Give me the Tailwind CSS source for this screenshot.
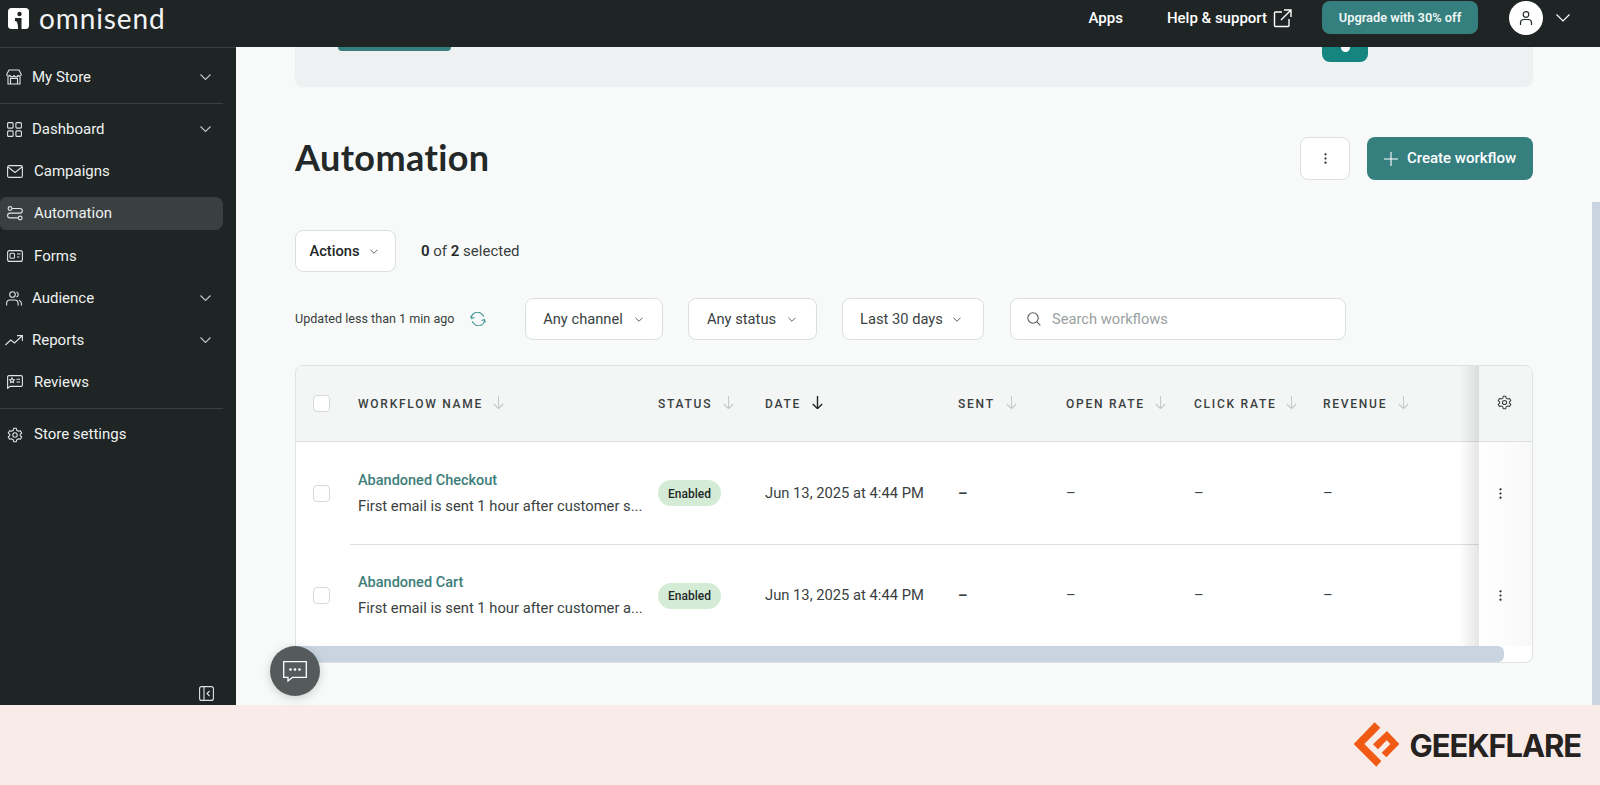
<!DOCTYPE html>
<html lang="en">
<head>
    <meta charset="UTF-8">
    <title>Omnisend Automation</title>
    <script src="https://cdn.jsdelivr.net/npm/@tailwindcss/browser@4"></script>
</head>
<body class="w-[1600px] h-[785px] overflow-hidden bg-[#f9ebe8] font-['Roboto',sans-serif] text-[#232828]">
    <!-- top bar -->
    <header class="h-[47px] bg-[#1f2424] flex items-center text-white relative z-10">
        <svg class="ml-[8px] w-[21px] h-[21px] -mt-[10px]" viewBox="0 0 21 21">
            <rect width="21" height="21" rx="3.5" fill="#fff"/>
            <circle cx="11.5" cy="6" r="2.2" fill="#1f2424"/>
            <path d="M7 10h6.5v11H10c0-5-.5-8-3-8z" fill="#1f2424"/>
        </svg>
        <span class="ml-[10px] -mt-[12px] font-['Lato',sans-serif] text-[28px] leading-none tracking-[0.9px] text-[#f2f4f4]">omnisend</span>
        <span class="ml-auto text-[15px] font-medium -mt-[11px]">Apps</span>
        <span class="ml-[44px] text-[15px] font-medium -mt-[11px]">Help &amp; support</span>
        <svg class="ml-[6px] w-[19px] h-[19px] -mt-[11px]" viewBox="0 0 19 19" fill="none" stroke="#fff" stroke-width="1.4"><path d="M9 3H2.5a1 1 0 0 0-1 1v12.5a1 1 0 0 0 1 1H15a1 1 0 0 0 1-1V10M11 1h7v7M18 1 8 11"/></svg>
        <span class="ml-[30px] w-[156px] h-[33px] -mt-[12px] rounded-lg bg-[#35807f] text-[12.8px] font-semibold text-[#f0f7f6] flex items-center justify-center">Upgrade with 30% off</span>
        <span class="ml-[31px] w-[34px] h-[34px] -mt-[12px] rounded-full bg-white flex items-center justify-center">
            <svg class="w-[16px] h-[16px]" viewBox="0 0 16 16" fill="none" stroke="#232828" stroke-width="1.2"><circle cx="8" cy="4.5" r="2.8"/><path d="M2.5 15v-2a3.5 3.5 0 0 1 3.5-3.5h4a3.5 3.5 0 0 1 3.5 3.5v2"/></svg>
        </span>
        <svg class="ml-[13px] mr-[30px] w-[14px] h-[8px] -mt-[11px]" viewBox="0 0 14 8" fill="none" stroke="#fff" stroke-width="1.2"><path d="m.5.5 6.500 6.500 6.500-6.500"/></svg>
    </header>

    <div class="flex h-[658px] relative">
        <!-- sidebar -->
        <aside class="w-[236px] shrink-0 bg-[#1f2424] text-[15px] text-[#eef2f2] border-t border-[#3a3f3f] relative">
            <div class="h-[57px] pt-[4px] mr-[13px] border-b border-[#3a4040] flex items-center pl-[6px] -mt-px">
                <svg class="w-[16px] h-[16px] mr-[10px]" viewBox="0 0 16 16" fill="none" stroke="#dfe4e4" stroke-width="1.1"><path d="M3 1h10l2.300 4.500a1.700 1.700 0 0 1-3.300.4 2 2 0 0 1-4 0 2 2 0 0 1-4 0 1.700 1.700 0 0 1-3.300-.4zM2 7v8h12V7M4.500 9.500h7V15h-7z"/></svg>
                <span>My Store</span>
                <svg class="ml-auto mr-[12px] w-[11px] h-[6px]" viewBox="0 0 11 6" fill="none" stroke="#c3c9c9" stroke-width="1.1"><path d="m.5.5 5 5 5-5"/></svg>
            </div>
            <div class="h-[42px] mt-[4px] mr-[13px] flex items-center pl-[6px]">
                <svg class="w-[15px] h-[15px] mr-[10px] ml-px" viewBox="0 0 15 15" fill="none" stroke="#dfe4e4" stroke-width="1.1"><rect x=".6" y=".6" width="5.500" height="5.500" rx="1"/><rect x="8.900" y=".6" width="5.500" height="5.500" rx="1"/><rect x=".6" y="8.900" width="5.500" height="5.500" rx="1"/><rect x="8.900" y="8.900" width="5.500" height="5.500" rx="1"/></svg>
                <span>Dashboard</span>
                <svg class="ml-auto mr-[12px] w-[11px] h-[6px]" viewBox="0 0 11 6" fill="none" stroke="#c3c9c9" stroke-width="1.1"><path d="m.5.5 5 5 5-5"/></svg>
            </div>
            <div class="h-[42px] mr-[13px] flex items-center pl-[7px]">
                <svg class="w-[16px] h-[13px] mr-[11px]" viewBox="0 0 16 13" fill="none" stroke="#dfe4e4" stroke-width="1.1"><rect x=".6" y=".6" width="14.800" height="11.800" rx="1.500"/><path d="m1 2 7 5.500L15 2"/></svg>
                <span>Campaigns</span>
            </div>
            <div class="h-[33px] mt-[5px] mr-[13px] rounded-r-lg rounded-l-md bg-[#3a4040] flex items-center pl-[7px]">
                <svg class="w-[16px] h-[15px] mr-[11px]" viewBox="0 0 16 15" fill="none" stroke="#dfe4e4" stroke-width="1.1"><circle cx="3" cy="2.500" r="1.900"/><path d="M5 2.500h8a2.300 2.300 0 0 1 0 4.600H3a2.300 2.300 0 0 0 0 4.800h8"/><circle cx="13.200" cy="12" r="1.900"/></svg>
                <span>Automation</span>
            </div>
            <div class="h-[42px] mt-[5px] mr-[13px] flex items-center pl-[7px]">
                <svg class="w-[16px] h-[12px] mr-[11px]" viewBox="0 0 16 12" fill="none" stroke="#dfe4e4" stroke-width="1.1"><rect x=".6" y=".6" width="14.800" height="10.800" rx="2"/><rect x="3" y="3.300" width="4.500" height="5" rx="1"/><path d="M10 4h3.500M10 7h2.500"/></svg>
                <span>Forms</span>
            </div>
            <div class="h-[42px] mr-[13px] flex items-center pl-[6px]">
                <svg class="w-[16px] h-[15px] mr-[10px]" viewBox="0 0 16 15" fill="none" stroke="#dfe4e4" stroke-width="1.1"><circle cx="6.500" cy="3.500" r="2.800"/><path d="M.6 14.500v-2a3.500 3.500 0 0 1 3.500-3.500h4.500a3.500 3.500 0 0 1 3.500 3.500v2M10.500.9a2.800 2.800 0 0 1 0 5.200M13 9.200a3.500 3.500 0 0 1 2.400 3.300v2"/></svg>
                <span>Audience</span>
                <svg class="ml-auto mr-[12px] w-[11px] h-[6px]" viewBox="0 0 11 6" fill="none" stroke="#c3c9c9" stroke-width="1.1"><path d="m.5.5 5 5 5-5"/></svg>
            </div>
            <div class="h-[42px] mr-[13px] flex items-center pl-[5px]">
                <svg class="w-[18px] h-[11px] mr-[9px]" viewBox="0 0 18 11" fill="none" stroke="#dfe4e4" stroke-width="1.1"><path d="m.4 10 5.300-5 3.800 3L17 1M12 .6h5.400V6"/></svg>
                <span>Reports</span>
                <svg class="ml-auto mr-[12px] w-[11px] h-[6px]" viewBox="0 0 11 6" fill="none" stroke="#c3c9c9" stroke-width="1.1"><path d="m.5.5 5 5 5-5"/></svg>
            </div>
            <div class="h-[42px] mr-[13px] flex items-center pl-[7px]">
                <svg class="w-[16px] h-[14px] mr-[11px]" viewBox="0 0 16 14" fill="none" stroke="#dfe4e4" stroke-width="1.1"><path d="M2 .6h12A1.400 1.400 0 0 1 15.400 2v8a1.400 1.400 0 0 1-1.400 1.400H3L.6 13.300V2A1.400 1.400 0 0 1 2 .6z"/><path d="m5 3 .8 1.500 1.600.3-1.200 1.100.3 1.600L5 6.700l-1.500.8.300-1.600-1.200-1.100 1.600-.3zM9.500 4.200h3.500M9.500 7h3.500"/></svg>
                <span>Reviews</span>
            </div>
            <div class="h-[52px] mt-[5px] mr-[13px] border-t border-[#3a4040] flex items-center pl-[7px]">
                <svg class="w-[16px] h-[16px] mr-[11px]" viewBox="0 0 24 24" fill="none" stroke="#dfe4e4" stroke-width="1.600"><path d="M10 2h4l.6 3 2.600 1.500 2.900-1 2 3.500-2.300 2v2l2.300 2-2 3.500-2.900-1-2.600 1.500-.6 3h-4l-.6-3-2.600-1.500-2.900 1-2-3.500 2.300-2v-2l-2.300-2 2-3.500 2.900 1L9.400 5z" stroke-linejoin="round"/><circle cx="12" cy="12" r="3.300"/></svg>
                <span>Store settings</span>
            </div>
            <svg class="absolute left-[199px] top-[638px] w-[15px] h-[15px]" viewBox="0 0 15 15" fill="none" stroke="#dfe4e4" stroke-width="1.100"><rect x=".6" y=".6" width="13.800" height="13.800" rx="2"/><path d="M5 .6v13.800M10.500 5 8 7.500l2.500 2.500"/></svg>
        </aside>

        <!-- page -->
        <main class="flex-1 flex bg-[#f8faf9]">
            <div class="w-[1356px] pl-[59px] pr-[59px]">
                <div class="h-[40px] rounded-b-lg bg-[#eef1f2] flex items-start">
                    <div class="ml-[43px] w-[113px] h-[4px] rounded-b-md bg-[#35807f]"></div>
                    <div class="ml-[871px] w-[46px] h-[15px] rounded-b-lg bg-[#17857f] flex justify-center">
                        <div class="w-[9px] h-[5px] rounded-b-full bg-white"></div>
                    </div>
                </div>

                <div class="mt-[50px] h-[43px] flex items-center">
                    <h1 class="-mt-[3px] font-['Lato',sans-serif] font-bold text-[36px] tracking-[0.4px] text-[#232828]">Automation</h1>
                    <button class="ml-auto w-[50px] h-[43px] rounded-lg bg-white border border-[#dcdfdf] flex items-center justify-center">
                        <svg class="w-[3px] h-[11px]" viewBox="0 0 3 11" fill="#232828"><circle cx="1.500" cy="1.300" r="1.100"/><circle cx="1.500" cy="5.500" r="1.100"/><circle cx="1.500" cy="9.700" r="1.100"/></svg>
                    </button>
                    <button class="ml-[17px] w-[166px] h-[43px] rounded-lg bg-[#35807f] text-white text-[15px] font-medium flex items-center justify-center">
                        <svg class="w-[14px] h-[14px] mr-[9px]" viewBox="0 0 14 14" stroke="#fff" stroke-width="1.100"><path d="M7 0v14M0 7h14"/></svg>
                        Create workflow
                    </button>
                </div>

                <div class="mt-[50px] h-[42px] flex items-center text-[15px]">
                    <button class="w-[101px] h-[42px] rounded-lg bg-white border border-[#dcdfdf] text-[14.7px] font-medium flex items-center justify-center pr-[4px]">
                        Actions
                        <svg class="ml-[10px] w-[8px] h-[5px]" viewBox="0 0 9 5" fill="none" stroke="#454a4a" stroke-width="1"><path d="m.5.500 4 4 4-4"/></svg>
                    </button>
                    <span class="ml-[25px] text-[#3a3f3f]"><b class="font-semibold text-[#232828]">0</b> of <b class="font-semibold text-[#232828]">2</b> selected</span>
                </div>

                <div class="mt-[26px] h-[42px] flex items-center">
                    <span class="w-[160px] whitespace-nowrap text-[12.6px] text-[#3a3f3f]">Updated less than 1 min ago</span>
                    <svg class="ml-[15px] w-[16px] h-[14px]" viewBox="0 0 16 14" fill="none" stroke="#4a9a97" stroke-width="1.100"><path d="M1.500 6A6 6 0 0 1 12.500 3L14 4.500M.7 3.500 1.500 6.500 4.500 5.500M14.500 8A6 6 0 0 1 3.500 11L2 9.500M15.300 10.500 14.500 7.500 11.500 8.500"/></svg>
                    <button class="ml-[39px] w-[138px] h-[42px] rounded-lg bg-white border border-[#dcdfdf] text-[14.7px] text-[#3a3f3f] flex items-center justify-center pr-[2px]">
                        Any channel
                        <svg class="ml-[12px] w-[8px] h-[5px]" viewBox="0 0 9 5" fill="none" stroke="#454a4a" stroke-width="1"><path d="m.5.500 4 4 4-4"/></svg>
                    </button>
                    <button class="ml-[25px] w-[129px] h-[42px] rounded-lg bg-white border border-[#dcdfdf] text-[14.7px] text-[#3a3f3f] flex items-center justify-center pr-[2px]">
                        Any status
                        <svg class="ml-[12px] w-[8px] h-[5px]" viewBox="0 0 9 5" fill="none" stroke="#454a4a" stroke-width="1"><path d="m.5.500 4 4 4-4"/></svg>
                    </button>
                    <button class="ml-[25px] w-[142px] h-[42px] rounded-lg bg-white border border-[#dcdfdf] text-[14.7px] text-[#3a3f3f] flex items-center justify-center pr-[5px]">
                        Last 30 days
                        <svg class="ml-[10px] w-[8px] h-[5px]" viewBox="0 0 9 5" fill="none" stroke="#454a4a" stroke-width="1"><path d="m.5.500 4 4 4-4"/></svg>
                    </button>
                    <div class="ml-[26px] w-[336px] h-[42px] rounded-lg bg-white border border-[#dcdfdf] flex items-center pl-[16px]">
                        <svg class="w-[14px] h-[14px] mr-[11px]" viewBox="0 0 14 14" fill="none" stroke="#555b5b" stroke-width="1.100"><circle cx="6" cy="6" r="5.200"/><path d="m9.800 9.800 3.500 3.500"/></svg>
                        <span class="text-[14.7px] text-[#9aa1a1]">Search workflows</span>
                    </div>
                </div>

                <!-- table -->
                <div class="mt-[25px] h-[298px] rounded-lg border border-[#dfe2e2] bg-white overflow-hidden flex flex-col relative">
                    <div class="flex-1 flex">
                        <div class="flex-1">
                            <div class="h-[76px] bg-[#f4f6f6] border-b border-[#dcdfdf] grid grid-cols-[62px_300px_107px_193px_108px_128px_129px_150px] items-center text-[12px] font-medium tracking-[1.75px] text-[#3a3f3f]">
                                <span class="ml-[17px] w-[17px] h-[17px] rounded-[4px] bg-white border border-[#d5d9d9]"></span>
                                <span class="flex items-center">WORKFLOW NAME<svg class="ml-[10px] w-[11px] h-[13px] -mt-[2px]" viewBox="0 0 11 13" fill="none" stroke="#c4c9c9" stroke-width="1.100"><path d="M5.500 0v12.500M.8 8l4.700 4.700L10.200 8"/></svg></span>
                                <span class="flex items-center">STATUS<svg class="ml-[11px] w-[11px] h-[13px] -mt-[2px]" viewBox="0 0 11 13" fill="none" stroke="#c4c9c9" stroke-width="1.100"><path d="M5.500 0v12.500M.8 8l4.700 4.700L10.200 8"/></svg></span>
                                <span class="flex items-center">DATE<svg class="ml-[11px] w-[11px] h-[13px] -mt-[2px]" viewBox="0 0 11 13" fill="none" stroke="#232828" stroke-width="1.400"><path d="M5.500 0v12.500M.8 8l4.700 4.700L10.200 8"/></svg></span>
                                <span class="flex items-center">SENT<svg class="ml-[11px] w-[11px] h-[13px] -mt-[2px]" viewBox="0 0 11 13" fill="none" stroke="#c4c9c9" stroke-width="1.100"><path d="M5.500 0v12.500M.8 8l4.700 4.700L10.200 8"/></svg></span>
                                <span class="flex items-center">OPEN RATE<svg class="ml-[10px] w-[11px] h-[13px] -mt-[2px]" viewBox="0 0 11 13" fill="none" stroke="#c4c9c9" stroke-width="1.100"><path d="M5.500 0v12.500M.8 8l4.700 4.700L10.200 8"/></svg></span>
                                <span class="flex items-center">CLICK RATE<svg class="ml-[10px] w-[11px] h-[13px] -mt-[2px]" viewBox="0 0 11 13" fill="none" stroke="#c4c9c9" stroke-width="1.100"><path d="M5.500 0v12.500M.8 8l4.700 4.700L10.200 8"/></svg></span>
                                <span class="flex items-center">REVENUE<svg class="ml-[11px] w-[11px] h-[13px] -mt-[2px]" viewBox="0 0 11 13" fill="none" stroke="#c4c9c9" stroke-width="1.100"><path d="M5.500 0v12.500M.8 8l4.700 4.700L10.200 8"/></svg></span>
                            </div>
                            <div class="h-[102px] grid grid-cols-[62px_300px_107px_193px_108px_128px_129px_150px] items-center text-[14.75px] text-[#3a3f3f]">
                                <span class="ml-[17px] w-[17px] h-[17px] rounded-[4px] bg-white border border-[#d5d9d9]"></span>
                                <div>
                                    <div class="text-[#3d7e7b] font-medium text-[14.5px] leading-[20px]">Abandoned Checkout</div>
                                    <div class="mt-[5px] leading-[20px] whitespace-nowrap">First email is sent 1 hour after customer s...</div>
                                </div>
                                <span class="w-[63px] h-[26px] pt-px rounded-full bg-[#d4ecd6] text-[12px] font-medium text-[#232828] flex items-center justify-center">Enabled</span>
                                <span>Jun 13, 2025 at 4:44 PM</span>
                                <span class="font-bold">–</span>
                                <span>–</span>
                                <span>–</span>
                                <span>–</span>
                            </div>
                            <div class="h-[102px] ml-[54px] border-t border-[#dcdfdf] grid grid-cols-[8px_300px_107px_193px_108px_128px_129px_150px] items-center text-[14.75px] text-[#3a3f3f] relative">
                                <span class="absolute -left-[37px] w-[17px] h-[17px] rounded-[4px] bg-white border border-[#d5d9d9]"></span>
                                <span></span>
                                <div>
                                    <div class="text-[#3d7e7b] font-medium text-[14.5px] leading-[20px]">Abandoned Cart</div>
                                    <div class="mt-[5px] leading-[20px] whitespace-nowrap">First email is sent 1 hour after customer a...</div>
                                </div>
                                <span class="w-[63px] h-[26px] pt-px rounded-full bg-[#d4ecd6] text-[12px] font-medium text-[#232828] flex items-center justify-center">Enabled</span>
                                <span>Jun 13, 2025 at 4:44 PM</span>
                                <span class="font-bold">–</span>
                                <span>–</span>
                                <span>–</span>
                                <span>–</span>
                            </div>
                        </div>
                        <!-- sticky column -->
                        <div class="w-[53px] shrink-0 bg-linear-to-r from-white to-[#f8f8f8] relative">
                            <div class="absolute right-full top-0 bottom-0 w-[20px] bg-linear-to-r from-transparent to-black/10"></div>
                            <div class="h-[76px] bg-[#f4f6f6] border-b border-[#dcdfdf] flex items-center justify-center pr-[3px]">
                                <svg class="w-[15px] h-[15px] -mt-[3px]" viewBox="0 0 24 24" fill="none" stroke="#3a3f3f" stroke-width="1.700"><path d="M10 2h4l.6 3 2.600 1.500 2.900-1 2 3.500-2.300 2v2l2.300 2-2 3.500-2.900-1-2.600 1.500-.6 3h-4l-.6-3-2.600-1.500-2.900 1-2-3.500 2.300-2v-2l-2.300-2 2-3.500 2.900 1L9.400 5z" stroke-linejoin="round"/><circle cx="12" cy="12" r="3.300"/></svg>
                            </div>
                            <div class="h-[102px] flex items-center justify-center pr-[11px]">
                                <svg class="w-[3px] h-[11px]" viewBox="0 0 3 11" fill="#232828"><circle cx="1.500" cy="1.300" r="1.100"/><circle cx="1.500" cy="5.500" r="1.100"/><circle cx="1.500" cy="9.700" r="1.100"/></svg>
                            </div>
                            <div class="h-[102px] flex items-center justify-center pr-[11px]">
                                <svg class="w-[3px] h-[11px]" viewBox="0 0 3 11" fill="#232828"><circle cx="1.500" cy="1.300" r="1.100"/><circle cx="1.500" cy="5.500" r="1.100"/><circle cx="1.500" cy="9.700" r="1.100"/></svg>
                            </div>
                        </div>
                    </div>
                    <div class="h-[16px] w-[1208px] rounded-r-md bg-[#c8d5e0] relative z-10 shrink-0"></div>
                </div>
            </div>
            <!-- page scrollbar -->
            <div class="w-[8px] ml-auto pt-[155px]"><div class="h-[503px] bg-[#c8d5e0]"></div></div>
        </main>

        <!-- chat bubble -->
        <button class="absolute left-[270px] top-[599px] w-[50px] h-[50px] rounded-full bg-[#555b5b] shadow-[0_2px_10px_rgba(0,0,0,0.18)] flex items-center justify-center z-20">
            <svg class="w-[24px] h-[21px]" viewBox="0 0 24 21" fill="none" stroke="#fff" stroke-width="1.300"><path d="M.7.7h22.600v15.600H9.500L5 20v-3.700H.7z"/><circle cx="7.500" cy="8.500" r=".7" fill="#fff"/><circle cx="12" cy="8.500" r=".7" fill="#fff"/><circle cx="16.500" cy="8.500" r=".7" fill="#fff"/></svg>
        </button>
    </div>

    <!-- watermark strip -->
    <footer class="h-[80px] flex items-center justify-end pr-[19px]">
        <svg class="w-[60px] h-[60px]" viewBox="0 0 180 180" fill="#f05a14">
            <path d="M83 22 100 38 52 87 103 138 88 155 20 87z"/>
            <path d="M120 48 157 87 118 127 104 113 130 87 119 76 93 103 78 88z"/>
        </svg>
        <span class="ml-[3px] font-['Inter',sans-serif] font-bold text-[31px] leading-none tracking-[-1.1px] text-[#26221f]">GEEKFLARE</span>
    </footer>
</body>
</html>
